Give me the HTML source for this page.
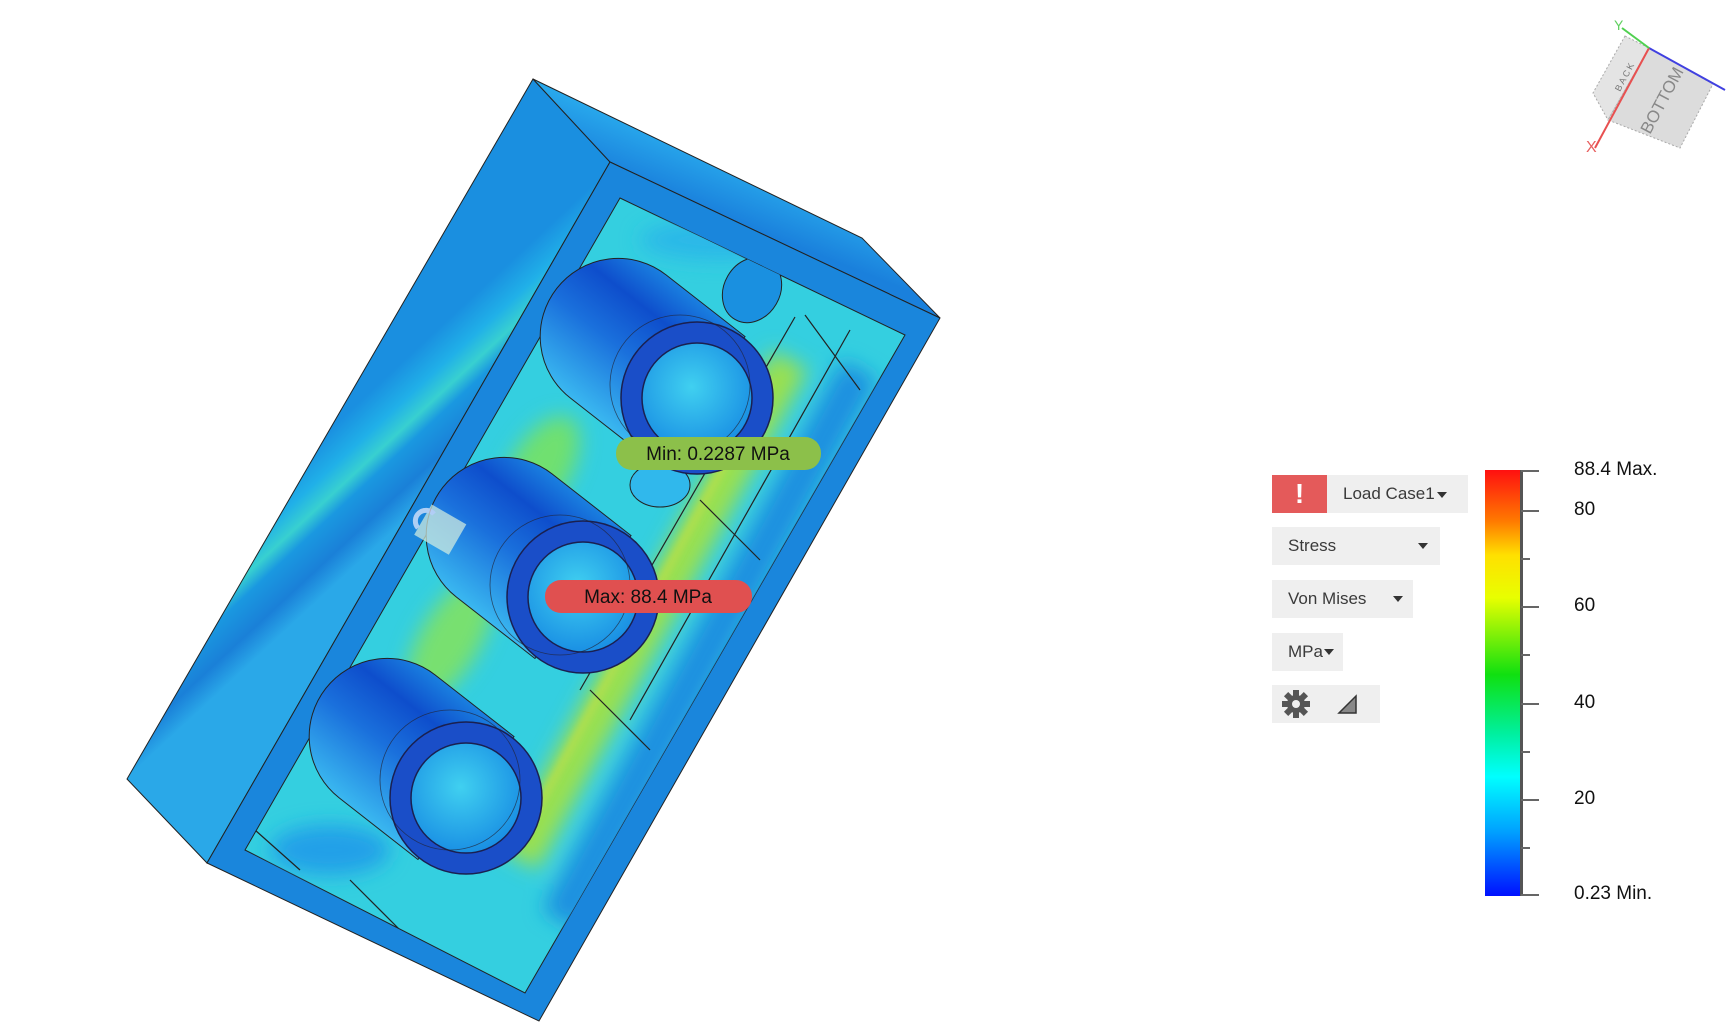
<!DOCTYPE html>
<html><head><meta charset="utf-8"><style>
html,body{margin:0;padding:0;background:#fff;width:1726px;height:1036px;overflow:hidden;font-family:"Liberation Sans",sans-serif}
svg{position:absolute;left:0;top:0}
.b{position:absolute;background:#efefef;color:#3a3a3a;font-size:17px;line-height:38px;height:38px}
.lab{position:absolute;left:1574px;font-size:19px;color:#111;line-height:20px}
.tri{display:inline-block;width:0;height:0;border-left:5px solid transparent;border-right:5px solid transparent;border-top:6px solid #333;vertical-align:middle}
</style></head><body>
<svg width="1726" height="1036" viewBox="0 0 1726 1036">
<defs>
<filter id="bl" x="-20%" y="-20%" width="140%" height="140%"><feGaussianBlur stdDeviation="10"/></filter>
<filter id="bl2" x="-20%" y="-20%" width="140%" height="140%"><feGaussianBlur stdDeviation="4"/></filter>
<linearGradient id="side" gradientUnits="userSpaceOnUse" x1="330" y1="429" x2="410" y2="515">
<stop offset="0" stop-color="#1a8fe0"/><stop offset="0.25" stop-color="#20b0e8"/><stop offset="0.42" stop-color="#38d0d0"/><stop offset="0.55" stop-color="#1a98e0"/><stop offset="0.8" stop-color="#1a80d8"/><stop offset="1" stop-color="#2aa8e8"/></linearGradient>
<linearGradient id="top" gradientUnits="userSpaceOnUse" x1="700" y1="150" x2="680" y2="200">
<stop offset="0" stop-color="#28a8ec"/><stop offset="1" stop-color="#1a80dc"/></linearGradient>
<linearGradient id="cyl" gradientUnits="userSpaceOnUse" x1="-78" y1="0" x2="78" y2="0">
<stop offset="0" stop-color="#3ab8f0"/><stop offset="0.45" stop-color="#1a70dc"/><stop offset="0.75" stop-color="#0e4ecc"/><stop offset="1" stop-color="#1a80e0"/></linearGradient>
<radialGradient id="hole" cx="0.45" cy="0.4" r="0.6"><stop offset="0" stop-color="#40d0f0"/><stop offset="1" stop-color="#1a90e4"/></radialGradient>
<clipPath id="pk"><polygon points="620,198 905,335 525,993 245,850"/></clipPath>
<g id="cy">
<g transform="rotate(-52)">
<path d="M-78 0 L-78 -100 A78 78 0 0 1 78 -100 L78 0 Z" fill="url(#cyl)" stroke="#222" stroke-width="1"/>
</g>
</g>
</defs>
<polygon points="533,79 610,162 207,863 127,779" fill="url(#side)" stroke="#222" stroke-width="1"/>
<polygon points="533,79 862,238 940,318 610,162" fill="url(#top)" stroke="#222" stroke-width="1"/>
<polygon points="610,162 940,318 539,1021 207,863" fill="#1a86dc" stroke="#222" stroke-width="1"/>
<polygon points="620,198 905,335 525,993 245,850" fill="#34cfe0" stroke="#222" stroke-width="1"/>
<g clip-path="url(#pk)">
<g filter="url(#bl)">
<ellipse cx="540" cy="470" rx="60" ry="30" fill="#70e070" transform="rotate(-60 540 470)"/>
<ellipse cx="450" cy="640" rx="70" ry="30" fill="#78e070" transform="rotate(-60 450 640)"/>
<ellipse cx="380" cy="720" rx="40" ry="20" fill="#60dc90"/>
<line x1="790" y1="360" x2="520" y2="860" stroke="#9ae050" stroke-width="40"/>
<line x1="860" y1="370" x2="560" y2="920" stroke="#1a90e0" stroke-width="40"/>
<ellipse cx="330" cy="850" rx="60" ry="25" fill="#20a0e8"/>
<ellipse cx="720" cy="240" rx="80" ry="20" fill="#2ab8e8"/>
</g>
<line x1="770" y1="380" x2="520" y2="840" stroke="#c8e040" stroke-width="6" opacity="0.8" filter="url(#bl2)"/>
<g stroke="#222" stroke-width="1.2" fill="none">
<line x1="795" y1="317" x2="580" y2="690"/>
<line x1="850" y1="330" x2="630" y2="720"/>
<line x1="805" y1="315" x2="860" y2="390"/>
<line x1="700" y1="500" x2="760" y2="560"/>
<line x1="590" y1="690" x2="650" y2="750"/>
<line x1="255" y1="830" x2="300" y2="870"/>
<line x1="350" y1="880" x2="420" y2="950"/>
</g>
<ellipse cx="752" cy="290" rx="28" ry="34" fill="#1a90e0" stroke="#222" transform="rotate(30 752 290)"/>
<ellipse cx="660" cy="485" rx="30" ry="22" fill="#30b8ec" stroke="#222"/>
</g>
<use href="#cy" transform="translate(697,398)"/>
<use href="#cy" transform="translate(583,597)"/>
<use href="#cy" transform="translate(466,798)"/>
<g stroke="#1a2050" stroke-width="1.5">
<circle cx="697" cy="398" r="76" fill="#1a4ec8"/><circle cx="697" cy="398" r="55" fill="url(#hole)"/>
<circle cx="583" cy="597" r="76" fill="#1a4ec8"/><circle cx="583" cy="597" r="55" fill="url(#hole)"/>
<circle cx="466" cy="798" r="76" fill="#1a4ec8"/><circle cx="466" cy="798" r="55" fill="url(#hole)"/>
</g>
<g stroke="#223" stroke-width="0.8" fill="none" opacity="0.7">
<circle cx="680" cy="385" r="70"/><circle cx="560" cy="585" r="70"/><circle cx="450" cy="780" r="70"/>
</g>
<g opacity="0.7"><rect x="420" y="512" width="40" height="35" fill="#d8f0e0" transform="rotate(30 440 530)"/><path d="M418 528 a10 10 0 0 1 16 -14" stroke="#eef" stroke-width="5" fill="none"/></g>
<rect x="616" y="437" width="205" height="33" rx="16" fill="#8cc04a"/>
<text x="718" y="460" font-family="Liberation Sans" font-size="19" fill="#111" text-anchor="middle">Min: 0.2287 MPa</text>
<rect x="545" y="580" width="207" height="33" rx="16" fill="#e05050"/>
<text x="648" y="603" font-family="Liberation Sans" font-size="19" fill="#111" text-anchor="middle">Max: 88.4 MPa</text>
<polygon points="1625,36 1649,48 1608,120 1593,93" fill="#e4e4e4" stroke="#aaa" stroke-dasharray="2 2"/>
<polygon points="1649,48 1713,84 1680,148 1608,120" fill="#dcdcdc" stroke="#aaa" stroke-dasharray="2 2"/>
<text transform="translate(1620,92) rotate(-62)" font-size="9" fill="#777" font-family="Liberation Sans" letter-spacing="2">BACK</text>
<text transform="translate(1650,135) rotate(-62)" font-size="17" fill="#888" font-family="Liberation Sans">BOTTOM</text>
<line x1="1649" y1="48" x2="1725" y2="90" stroke="#4040e0" stroke-width="2"/>
<line x1="1649" y1="48" x2="1595" y2="148" stroke="#e85050" stroke-width="2"/>
<line x1="1649" y1="48" x2="1622" y2="28" stroke="#50d050" stroke-width="2"/>
<text x="1614" y="30" font-size="14" fill="#60d060" font-family="Liberation Sans">Y</text>
<text x="1586" y="152" font-size="16" fill="#e86060" font-family="Liberation Sans">X</text>
<defs><linearGradient id="cb" x1="0" y1="0" x2="0" y2="1">
<stop offset="0" stop-color="#ff1010"/><stop offset="0.12" stop-color="#ff7a00"/><stop offset="0.2" stop-color="#ffe000"/><stop offset="0.3" stop-color="#e8ff00"/><stop offset="0.48" stop-color="#10e010"/><stop offset="0.62" stop-color="#00f0a0"/><stop offset="0.72" stop-color="#00ffff"/><stop offset="0.85" stop-color="#00a0ff"/><stop offset="1" stop-color="#0010ff"/></linearGradient></defs>
<rect x="1485" y="470" width="36" height="426" fill="url(#cb)"/>
<rect x="1520" y="470" width="3" height="426" fill="#555"/>
<g stroke="#666" stroke-width="2">
<line x1="1521" y1="471" x2="1539" y2="471"/><line x1="1521" y1="511" x2="1539" y2="511"/>
<line x1="1521" y1="559" x2="1530" y2="559"/><line x1="1521" y1="607" x2="1539" y2="607"/>
<line x1="1521" y1="655" x2="1530" y2="655"/><line x1="1521" y1="704" x2="1539" y2="704"/>
<line x1="1521" y1="752" x2="1530" y2="752"/><line x1="1521" y1="800" x2="1539" y2="800"/>
<line x1="1521" y1="848" x2="1530" y2="848"/><line x1="1521" y1="895" x2="1539" y2="895"/>
</g>
</svg>
<div class="lab" style="top:460px">88.4 Max.</div>
<div class="lab" style="top:500px">80</div>
<div class="lab" style="top:596px">60</div>
<div class="lab" style="top:693px">40</div>
<div class="lab" style="top:789px">20</div>
<div class="lab" style="top:884px">0.23 Min.</div>
<div class="b" style="left:1272px;top:475px;width:196px">
<span style="position:absolute;left:0;top:0;width:55px;height:38px;background:#e45a5a;color:#fff;font-size:28px;text-align:center;font-weight:bold">!</span>
<span style="position:absolute;left:71px">Load Case1<span class="tri" style="margin-left:2px"></span></span></div>
<div class="b" style="left:1272px;top:527px;width:168px"><span style="position:absolute;left:16px">Stress</span><span class="tri" style="position:absolute;left:146px;top:16px"></span></div>
<div class="b" style="left:1272px;top:580px;width:141px"><span style="position:absolute;left:16px">Von Mises</span><span class="tri" style="position:absolute;left:121px;top:16px"></span></div>
<div class="b" style="left:1272px;top:633px;width:71px"><span style="position:absolute;left:16px">MPa</span><span class="tri" style="position:absolute;left:52px;top:16px"></span></div>
<div class="b" style="left:1272px;top:685px;width:108px">
<svg width="108" height="38" style="position:absolute;left:0;top:0">
<g transform="translate(24,19)" fill="#555"><circle r="9"/>
<g><rect x="-3" y="-14" width="6" height="28"/><rect x="-14" y="-3" width="28" height="6"/><rect x="-3" y="-14" width="6" height="28" transform="rotate(45)"/><rect x="-3" y="-14" width="6" height="28" transform="rotate(-45)"/></g>
<circle r="4" fill="#efefef"/></g>
<polygon points="67,28 84,28 84,11" fill="#888" stroke="#333" stroke-width="1.5"/>
</svg></div>
</body></html>
